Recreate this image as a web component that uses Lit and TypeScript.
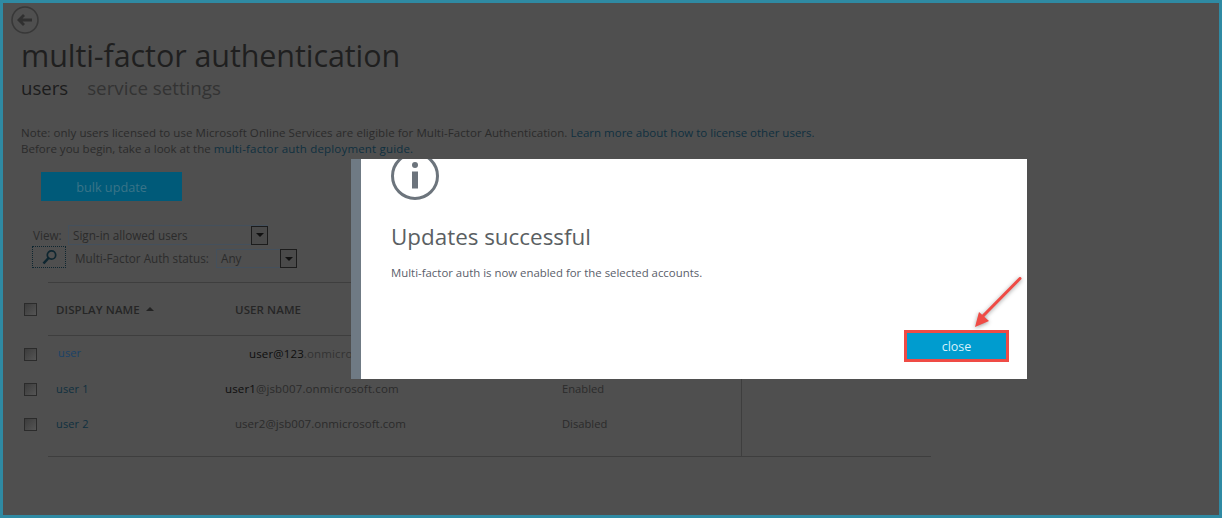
import { LitElement, html, css, svg } from "lit";
import { customElement } from "lit/decorators.js";

@customElement("app-root")
export class AppRoot extends LitElement {
  static styles = css`
    :host { display: block; }
    .frame {
      position: relative; box-sizing: border-box; width: 1222px; height: 518px; overflow: hidden;
      border: 3px solid #2f8aa3; background: #4f4f4f; color: #232323;
      font-family: "Open Sans", "Noto Sans", sans-serif; font-size: 11px;
    }
    .page { display: flex; flex-direction: column; padding: 3px 0 0 18px; }
    .back { display: block; margin-left: -10px; height: 28px; flex: none; }
    .title { margin: 1px 0 0; font-size: 30.5px; line-height: 40px; font-weight: 400; color: #1f1f1f; letter-spacing: -0.08px; }
    .tabs { display: flex; gap: 19px; font-size: 18.6px; line-height: 26px; }
    .tabs .on { color: #1c1c1c; }
    .tabs .off { color: #333; font-size: 18.75px; }
    .note { margin-top: 24px; font-size: 11.53px; line-height: 16px; color: #2b2b2b; }
    .note a { color: #10303f; }
    .lead { letter-spacing: 0.05px; }
    .guide { letter-spacing: 0.17px; }
    .bulk {
      box-sizing: border-box; width: 141px; height: 29px; margin: 15px 0 0 20px; background: #005a79; color: #3a7488;
      display: flex; align-items: center; justify-content: center; font-size: 12.7px;
    }
    .filters { margin: 24px 0 0 11px; display: flex; flex-direction: column; gap: 1px; color: #2c2c2c; font-size: 11.7px; }
    .line { display: flex; }
    .view { box-sizing: border-box; width: 36px; padding-left: 1px; line-height: 20px; }
    .select {
      box-sizing: border-box; height: 20px; border: 1px solid #44505c; display: flex; align-items: center;
      justify-content: space-between; padding-left: 4px; color: #2b2b2b;
    }
    .s1 { width: 200px; }
    .s2 { width: 81px; height: 19px; margin-left: 6px; align-self: flex-end; }
    .s2 .txt { margin-bottom: 2px; }
    .arrow {
      box-sizing: border-box; width: 17px; height: 19px; border: 1px solid #1c1c1c; background: #4a4a4a;
      display: flex; align-items: center; justify-content: center; margin-right: -1px; flex: none;
    }
    .tri { width: 0; height: 0; border: 4px solid transparent; border-top: 4px solid #111; border-bottom: 0; }
    .search {
      box-sizing: border-box; width: 34px; height: 22px; border: 1px dotted #0e2630;
      display: flex; align-items: center; justify-content: center; margin-right: 9px;
    }
    .status { align-self: flex-end; line-height: 20px; width: 135px; white-space: nowrap; }
    .table { margin: 14px 0 0 27px; width: 883px; border-top: 1px solid #3e3e3e; }
    .row { display: flex; align-items: center; position: relative; }
    .head { height: 53px; border-bottom: 1px solid #3e3e3e; box-sizing: border-box; font-weight: 600; font-size: 11.5px; letter-spacing: 0.1px; color: #262626; }
    .cb {
      box-sizing: border-box; position: absolute; left: -24px; width: 13px; height: 13px; border: 1px solid #2b2b2b;
      background: linear-gradient(135deg, #3c3c3c, #555);
    }
    .name { width: 179px; margin-left: 8px; display: flex; align-items: center; gap: 6px; flex: none; }
    .sort { width: 0; height: 0; border: 4px solid transparent; border-bottom: 4px solid #232323; border-top: 0; }
    .body { height: 35px; font-size: 11px; letter-spacing: 0.15px; }
    .body .name, .body .mail, .body .state { margin-bottom: 2px; }
    .first { height: 36px; }
    .first .cb { top: 12px; }
    .link { color: #10303f; }
    .first .link { color: #1a4268; margin: 0 0 2px 2px; }
    .mail { flex: none; width: 327px; color: #2b2b2b; font-size: 11.5px; letter-spacing: 0.14px; white-space: nowrap; }
    .m0 { padding-left: 14px; color: #333; width: 313px; }
    .m1 { margin-left: -10px; width: 337px; }
    .m2 { letter-spacing: 0.04px; }
    .m1 b, .m0 b { font-weight: 400; color: #0e0e0e; }
    .state { font-size: 11.2px; letter-spacing: 0; color: #2b2b2b; }
    .rows { display: flex; flex-direction: column; }
    .spacer { height: 14px; border-bottom: 1px solid #3e3e3e; }
    .vline { position: absolute; left: 738px; top: 370px; width: 1px; height: 83px; background: #3e3e3e; }
    .dialog {
      position: absolute; left: 348px; top: 156px; width: 676px; height: 220px; box-sizing: border-box;
      background: #fff; border-left: 10px solid #6f7a84; padding: 0 18px 0 30px; display: flex; flex-direction: column; overflow: hidden;
    }
    .info { display: block; margin-top: -7px; flex: none; }
    .dlg-title { margin: 22px 0 0; font-size: 22.4px; line-height: 30px; font-weight: 400; color: #5b5f63; }
    .dlg-text { margin-top: 13px; font-size: 11.4px; line-height: 16px; color: #5a5e6a; }
    .actions { margin-top: auto; padding-bottom: 17px; display: flex; justify-content: flex-end; }
    .close {
      box-sizing: border-box; width: 105px; height: 32px; border: 3px solid #ef4b45; background: #009ccf; color: #d8f1fa;
      display: flex; align-items: center; justify-content: center; font-size: 12.5px; font-family: inherit; padding: 0;
    }
    .annot { position: absolute; left: 965px; top: 272px; overflow: visible; filter: drop-shadow(0 1px 2px rgba(0,0,0,.4)); }
  `;

  render() {
    return html`<div class="frame">
      <div class="page">
        <svg class="back" width="30" height="28" viewBox="0 0 30 28">
          <circle cx="14" cy="14" r="13" fill="none" stroke="#383838" stroke-width="1.6"/>
          <path d="M8 14H21M13 9 8 14l5 5" fill="none" stroke="#303030" stroke-width="2.8"/>
        </svg>
        <h1 class="title">multi-factor authentication</h1>
        <div class="tabs"><span class="on">users</span><span class="off">service settings</span></div>
        <div class="note">
          <span class="lead">Note: only users licensed to use Microsoft Online Services are eligible for Multi-Factor Authentication.</span>
          <a>Learn more about how to license other users.</a><br/>
          Before you begin, take a look at the <a class="guide">multi-factor auth deployment guide.</a>
        </div>
        <div class="bulk">bulk update</div>
        <div class="filters">
          <div class="line"><span class="view">View:</span><div class="select s1">Sign-in allowed users<span class="arrow"><i class="tri"></i></span></div></div>
          <div class="line">
            <div class="search">
              <svg width="17" height="17" viewBox="0 0 17 17">
                <circle cx="10.5" cy="6" r="4.2" fill="none" stroke="#0e2630" stroke-width="1.7"/>
                <path d="M7.5 9 2.5 14.5" stroke="#0e2630" stroke-width="2.6" fill="none"/>
              </svg>
            </div>
            <span class="status">Multi-Factor Auth status:</span><div class="select s2"><span class="txt">Any</span><span class="arrow"><i class="tri"></i></span></div>
          </div>
        </div>
        <div class="table">
          <div class="row head"><i class="cb"></i><div class="name">DISPLAY NAME <i class="sort"></i></div><div>USER NAME</div></div>
          <div class="rows">
            <div class="row body first"><i class="cb"></i><div class="name"><span class="link">user</span></div><div class="mail m0"><b>user@123</b>.onmicrosoft.com</div></div>
            <div class="row body"><i class="cb"></i><div class="name"><span class="link">user 1</span></div><div class="mail m1"><b>user1</b>@jsb007.onmicrosoft.com</div><div class="state">Enabled</div></div>
            <div class="row body"><i class="cb"></i><div class="name"><span class="link">user 2</span></div><div class="mail m2">user2@jsb007.onmicrosoft.com</div><div class="state">Disabled</div></div>
          </div>
          <div class="spacer"></div>
        </div>
      </div>
      <div class="vline"></div>
      <div class="dialog">
        <svg class="info" width="48" height="48" viewBox="0 0 48 48">
          <circle cx="24" cy="24" r="22.5" fill="none" stroke="#6c747c" stroke-width="3"/>
          <circle cx="24" cy="13" r="3" fill="#6c747c"/>
          <rect x="21" y="19.5" width="6" height="17" fill="#6c747c"/>
        </svg>
        <h2 class="dlg-title">Updates successful</h2>
        <div class="dlg-text">Multi-factor auth is now enabled for the selected accounts.</div>
        <div class="actions"><button class="close">close</button></div>
      </div>
      <svg class="annot" width="60" height="60" viewBox="0 0 60 60">
        ${svg`<path d="M52 3.5 L15 41" stroke="#ef4b45" stroke-width="3" stroke-linecap="round" fill="none"/>
        <path d="M7 52 L11 37 L21 46 Z" fill="#ef4b45"/>`}
      </svg>
    </div>`;
  }
}
